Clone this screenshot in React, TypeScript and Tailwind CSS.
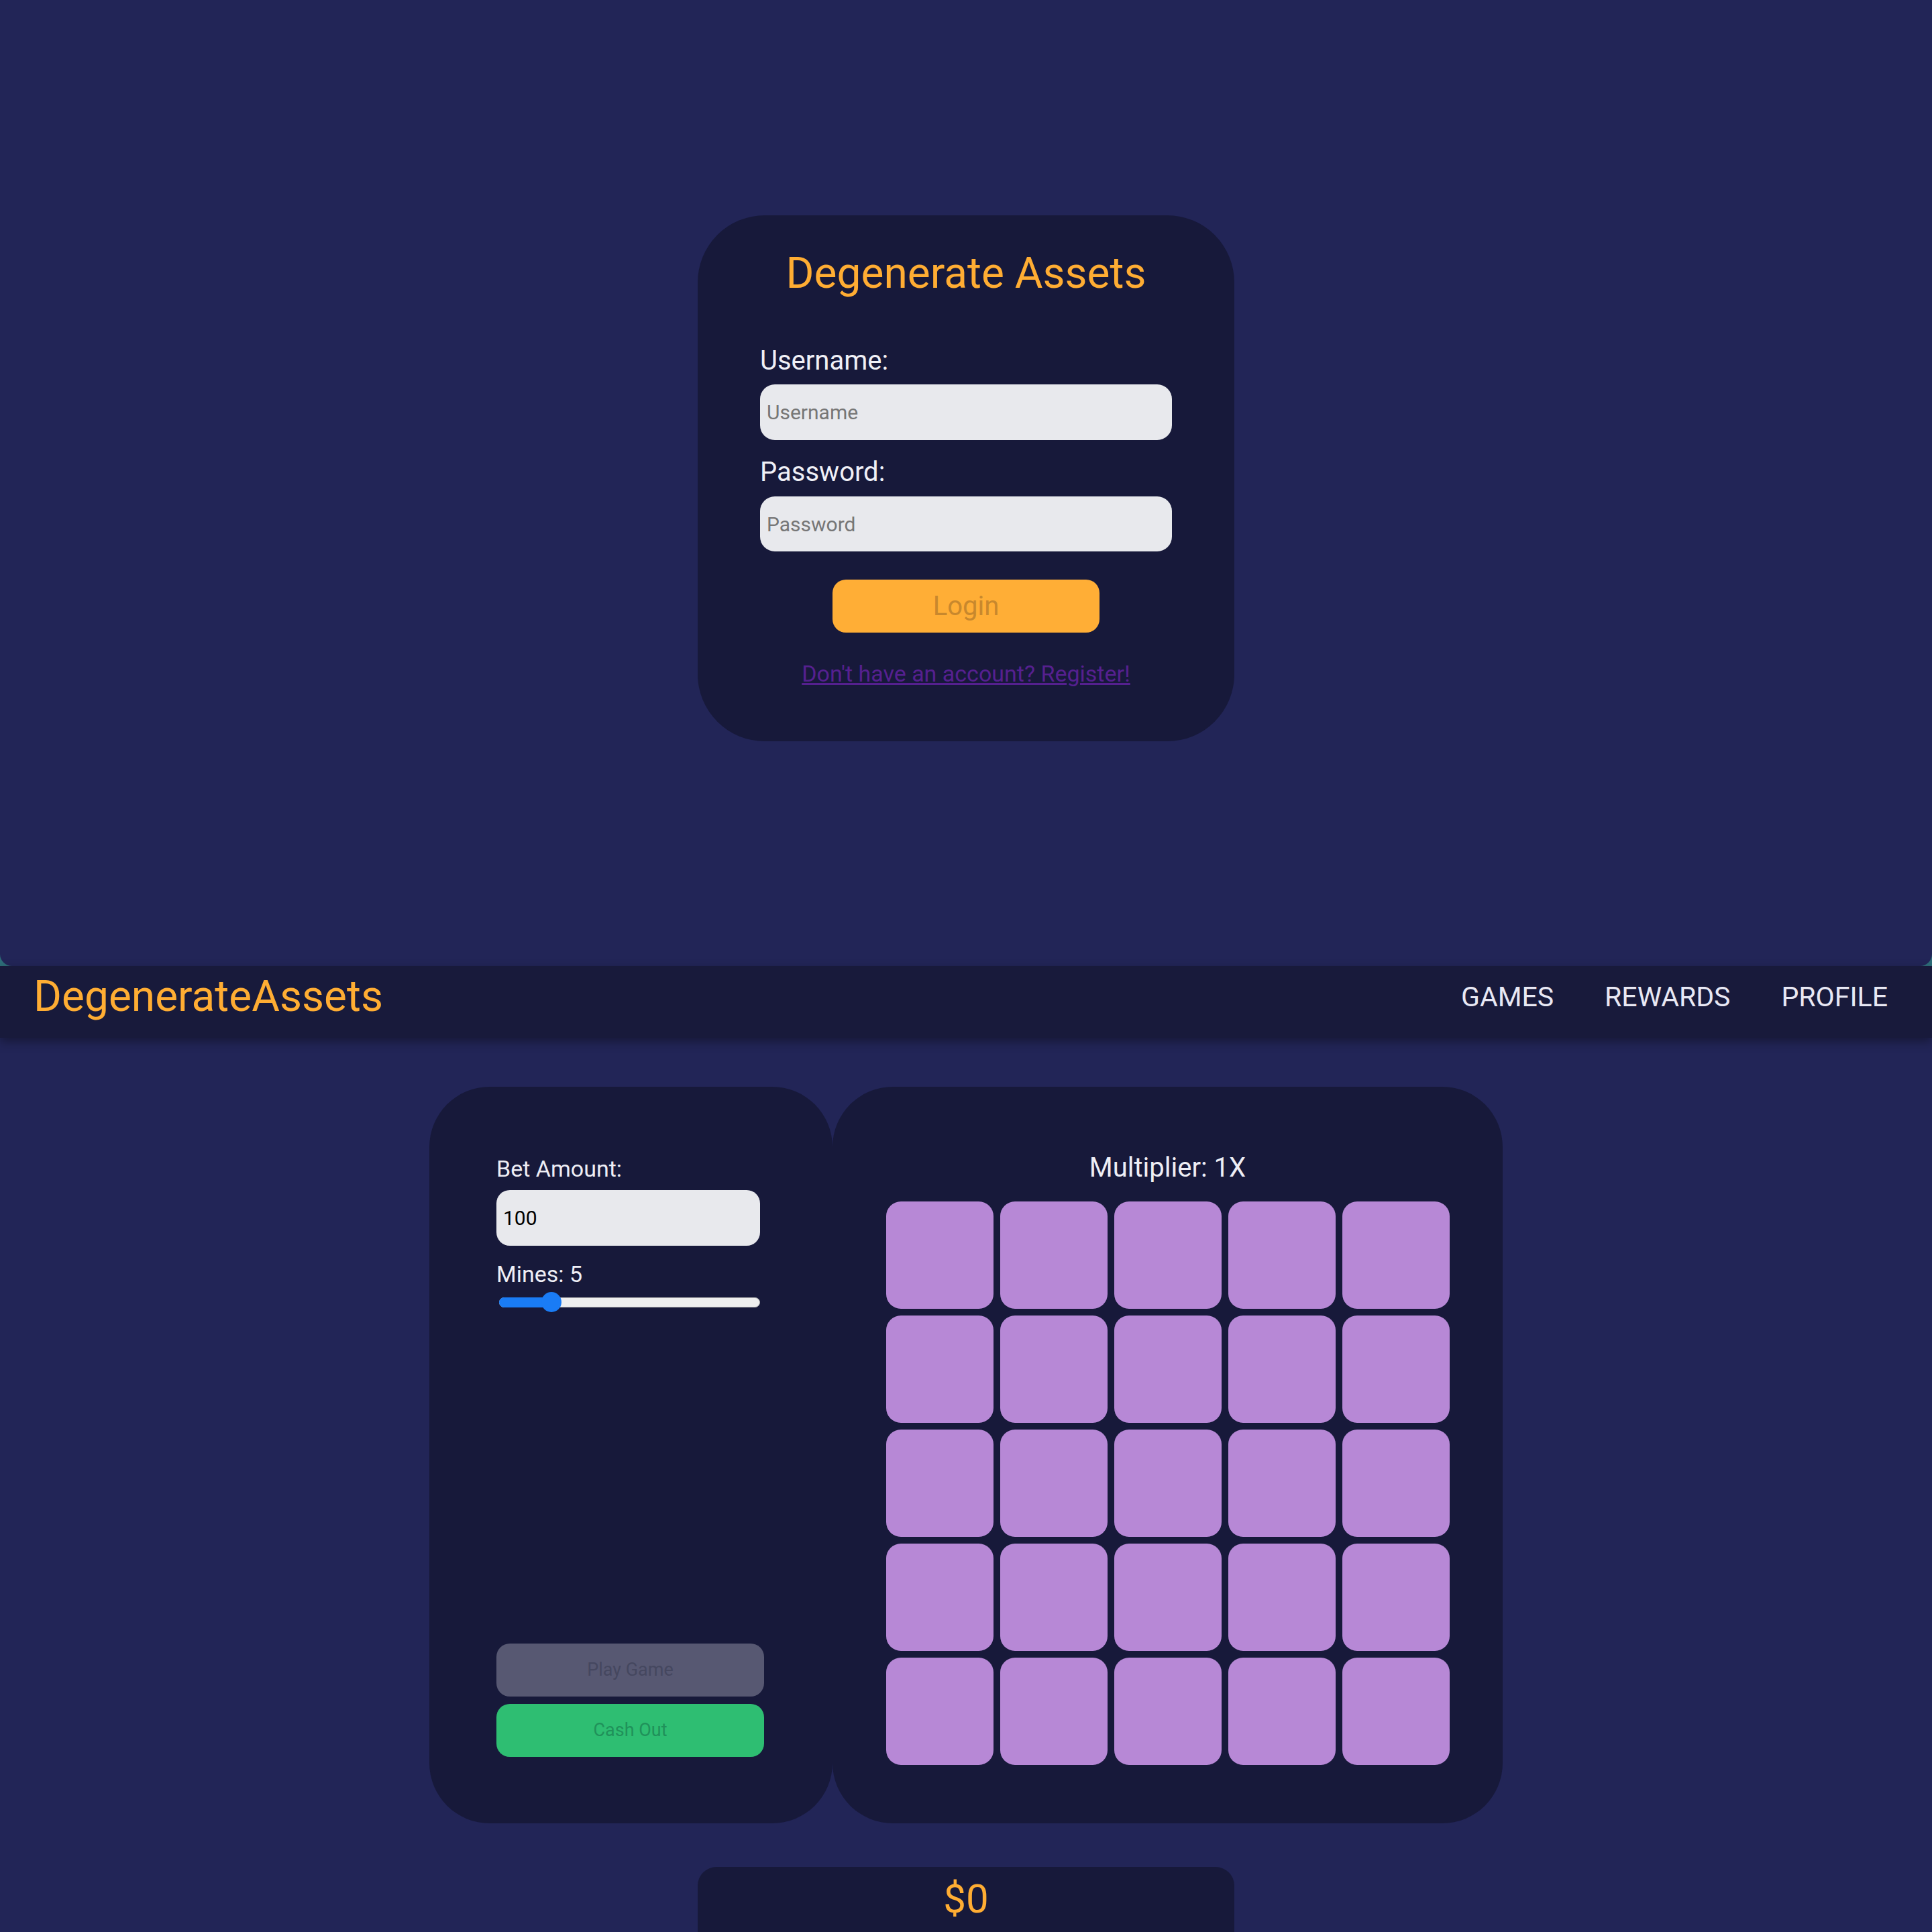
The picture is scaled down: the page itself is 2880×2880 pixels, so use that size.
import React from 'react';

const tiles = Array.from({ length: 25 }, (_, i) => i);

function LoginCard() {
  return (
    <div className="mx-auto flex w-[800px] flex-col items-center rounded-[100px] bg-[#17193a] pt-[49px] pb-[81px]">
      <h1 className="text-[64px] leading-[76px] font-normal text-[#ffad33]">Degenerate Assets</h1>
      <form className="flex w-[614px] flex-col" onSubmit={(e) => e.preventDefault()}>
        <label className="mt-[68px] text-[40px] leading-[48px] text-[#f0f0f6]">Username:</label>
        <input
          className="mt-[11px] h-[83px] rounded-[22px] bg-[#e8e9ed] px-[10px] text-[30px] text-black outline-none placeholder:text-[#767676]"
          placeholder="Username"
        />
        <label className="mt-[24px] text-[40px] leading-[48px] text-[#f0f0f6]">Password:</label>
        <input
          type="password"
          className="mt-[12px] h-[82px] rounded-[22px] bg-[#e8e9ed] px-[10px] text-[30px] text-black outline-none placeholder:text-[#767676]"
          placeholder="Password"
        />
        <button className="mx-auto mt-[42px] h-[79px] w-[398px] rounded-[20px] bg-[#ffae36] text-[40px] text-[#c8882d]">
          Login
        </button>
      </form>
      <a href="#" className="mt-[41px] text-[34px] leading-[40px] text-[#55208f] underline">
        Don't have an account? Register!
      </a>
    </div>
  );
}

function NavBar() {
  return (
    <nav className="relative z-10 flex h-[107px] items-center justify-between bg-[#181a3b] pr-[66px] pb-[16px] pl-[50px] shadow-[0_6px_14px_rgba(0,0,0,0.35)]">
      <span className="text-[64px] leading-[76px] text-[#ffad33]">DegenerateAssets</span>
      <div className="flex gap-[76px] text-[41px] leading-[48px] text-[#e8e8f4]">
        <a href="#">GAMES</a>
        <a href="#">REWARDS</a>
        <a href="#">PROFILE</a>
      </div>
    </nav>
  );
}

function ControlPanel() {
  const pct = 20;
  return (
    <div className="flex h-[1098px] w-[601px] flex-col rounded-[90px] bg-[#17193a] px-[100px] pt-[102px] pb-[99px]">
      <label className="text-[34px] leading-[40px] text-[#eeeef5]">Bet Amount:</label>
      <input
        className="mt-[12px] h-[83px] w-[393px] rounded-[20px] bg-[#e8e9ed] px-[10px] text-[30px] text-black outline-none"
        defaultValue="100"
      />
      <label className="mt-[22px] text-[34px] leading-[40px] text-[#eeeef5]">Mines: 5</label>
      <div className="relative mt-[7px] ml-[4px] flex h-[30px] w-[389px] items-center">
        <div className="h-[15px] w-full rounded-full border border-[#b5b5b5] bg-[#efefef]" />
        <div className="absolute left-0 h-[15px] rounded-l-full bg-[#1a7cf5]" style={{ width: `${pct}%` }} />
        <div
          className="absolute h-[30px] w-[30px] -translate-x-1/2 rounded-full bg-[#1a7cf5]"
          style={{ left: `${pct}%` }}
        />
      </div>
      <div className="mt-auto flex flex-col gap-[11px]">
        <button className="h-[79px] w-[399px] rounded-[20px] bg-[#575872] text-[27px] text-[#45475f]">Play Game</button>
        <button className="h-[79px] w-[399px] rounded-[20px] bg-[#2ebe72] text-[27px] text-[#20915a]">Cash Out</button>
      </div>
    </div>
  );
}

function Board() {
  return (
    <div className="flex h-[1098px] w-[999px] flex-col items-center rounded-[90px] bg-[#17193a] pt-[97px]">
      <div className="text-[40px] leading-[48px] text-[#eeeef5]">Multiplier: 1X</div>
      <div className="mt-[26px] grid grid-cols-[repeat(5,160px)] grid-rows-[repeat(5,160px)] gap-[10px]">
        {tiles.map((t) => (
          <button key={t} className="rounded-[22px] bg-[#b788d6]" />
        ))}
      </div>
    </div>
  );
}

export default function App() {
  return (
    <div className="min-h-screen bg-[#2d6c78] font-['Roboto',sans-serif]">
      <section className="h-[1440px] rounded-b-[18px] bg-[#222557] pt-[321px]">
        <LoginCard />
      </section>
      <div className="bg-[#222557] pb-[40px]">
        <NavBar />
        <main className="flex justify-center pt-[73px]">
          <ControlPanel />
          <Board />
        </main>
        <div className="mx-auto mt-[65px] flex h-[140px] w-[800px] justify-center rounded-t-[28px] bg-[#17193a] pt-[12px]">
          <span className="text-[60px] leading-[72px] text-[#ffad33]">$0</span>
        </div>
      </div>
    </div>
  );
}
